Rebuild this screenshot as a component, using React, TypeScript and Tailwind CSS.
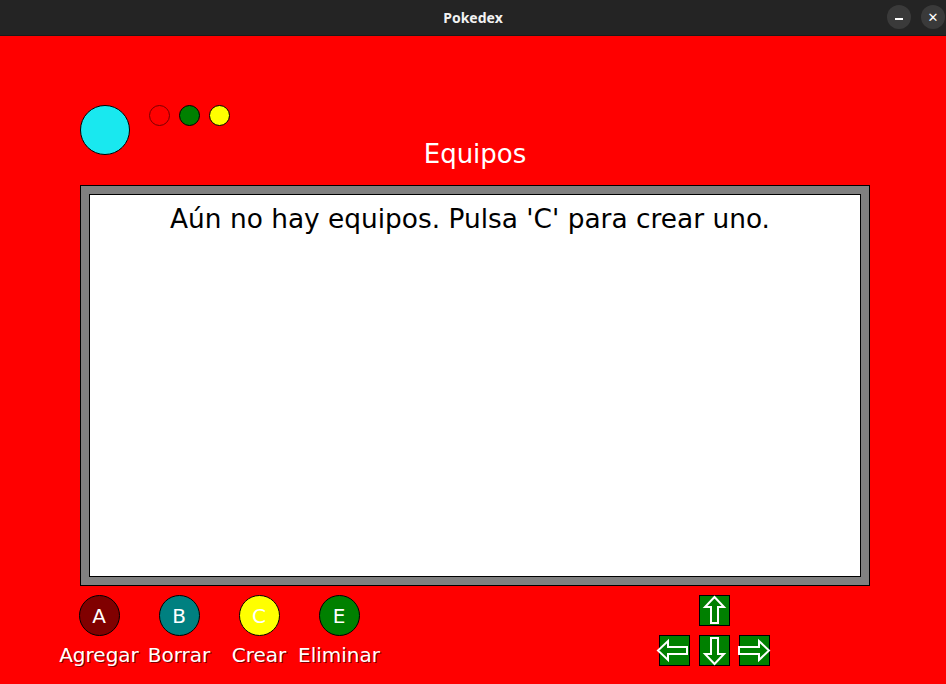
import React from "react";

const font = { fontFamily: '"DejaVu Sans", sans-serif' };

function ArrowBox({ dir }: { dir: "up" | "down" | "left" | "right" }) {
  const pts: Record<string, string> = {
    up: "15.5,2 25,12 19,12 19,28 12,28 12,12 6,12",
    down: "15.5,29 25,19 19,19 19,3 12,3 12,19 6,19",
    left: "-1,15.5 9,6 9,12 28,12 28,19 9,19 9,25",
    right: "30,15.5 20,6 20,12 0,12 0,19 20,19 20,25",
  };
  return (
    <div className="relative w-[31px] h-[31px] bg-[#008000] border border-black">
      <svg
        className="absolute -left-px -top-px overflow-visible"
        width="31"
        height="31"
        viewBox="0 0 31 31"
      >
        <polygon points={pts[dir]} fill="none" stroke="white" strokeWidth="2" strokeLinejoin="miter" />
      </svg>
    </div>
  );
}

function Btn({ letter, color, label }: { letter: string; color: string; label: string }) {
  return (
    <div className="flex flex-col items-center w-[80px]">
      <div
        className={`w-[41px] h-[41px] rounded-full border border-black flex items-center justify-center text-white text-[20px] leading-none ${color}`}
      >
        {letter}
      </div>
      <div
        className="mt-[7px] text-white text-[20px] leading-[24px] whitespace-nowrap"
        style={{ textShadow: "1px 1px 0 #7a0000" }}
      >
        {label}
      </div>
    </div>
  );
}

export default function App() {
  return (
    <div className="w-[946px] h-[684px] flex flex-col bg-[#ff0000] overflow-hidden" style={font}>
      <div className="h-[36px] bg-[#242424] border-b border-[#1a1a1a] flex items-center relative shrink-0">
        <div
          className="flex-1 text-center text-[14px] font-bold text-[#f2f2f2]"
          style={{ fontFamily: '"Noto Sans", sans-serif' }}
        >
          Pokedex
        </div>
        <div className="absolute right-[1px] top-[5px] flex gap-[10px]">
          <div className="w-[24px] h-[24px] rounded-full bg-[#3a3a3a] flex items-center justify-center">
            <div className="w-[8px] h-[1.5px] bg-white mt-[4px]" />
          </div>
          <div className="w-[24px] h-[24px] rounded-full bg-[#3a3a3a] flex items-center justify-center text-white text-[13px] leading-none">
            ✕
          </div>
        </div>
      </div>

      <div className="flex flex-col pl-[80px] pt-[69px]">
        <div className="flex items-start">
          <div className="w-[50px] h-[50px] rounded-full bg-[#19e8ef] border border-black" />
          <div className="flex gap-[9px] ml-[19px]">
            <div className="w-[21px] h-[21px] rounded-full border border-[#7a0000] bg-[#ff0000]" />
            <div className="w-[21px] h-[21px] rounded-full border border-black bg-[#008000]" />
            <div className="w-[21px] h-[21px] rounded-full border border-black bg-[#ffff00]" />
          </div>
        </div>
        <div className="w-[790px] -mt-[16px] text-center text-white text-[26px] leading-[30px]">Equipos</div>
        <div className="mt-[16px] w-[790px] h-[401px] border border-black bg-[#808080] p-[8px]">
          <div className="w-full h-full bg-white border border-black pt-[9px] pr-[10px] text-center text-black text-[26.4px] leading-[30px]">
            Aún no hay equipos. Pulsa 'C' para crear uno.
          </div>
        </div>

        <div className="flex mt-[9px] -ml-[21px]">
          <Btn letter="A" color="bg-[#800000]" label="Agregar" />
          <Btn letter="B" color="bg-[#008080]" label="Borrar" />
          <Btn letter="C" color="bg-[#ffff00]" label="Crear" />
          <Btn letter="E" color="bg-[#008000]" label="Eliminar" />
          <div className="ml-[280px] flex flex-col items-center gap-[9px]">
            <ArrowBox dir="up" />
            <div className="flex gap-[9px]">
              <ArrowBox dir="left" />
              <ArrowBox dir="down" />
              <ArrowBox dir="right" />
            </div>
          </div>
        </div>
      </div>
    </div>
  );
}
